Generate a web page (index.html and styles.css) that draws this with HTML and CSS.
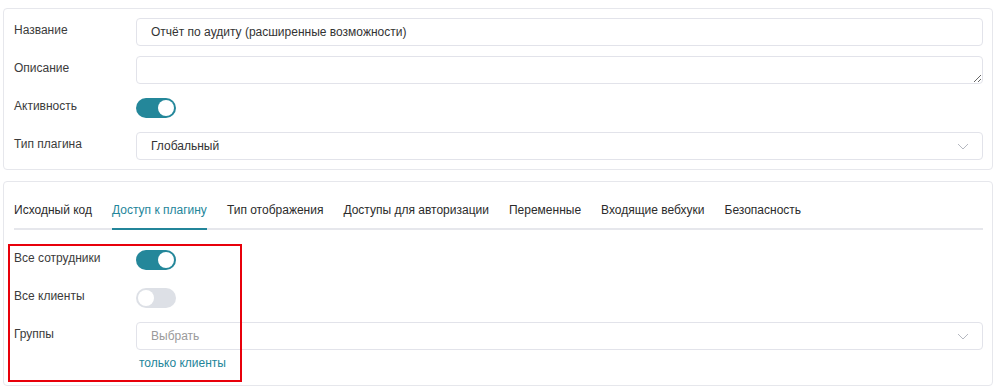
FILE: index.html
```html
<!DOCTYPE html>
<html lang="ru">

<head>
    <meta charset="UTF-8">
    <meta name="viewport" content="width=device-width, initial-scale=1.0">
    <title>Плагин</title>
    <link rel="stylesheet" href="styles.css">
</head>

<body>
    <div class="card card-main">
        <div class="form-row">
            <label class="label">Название</label>
            <div class="field">
                <input class="input" type="text" value="Отчёт по аудиту (расширенные возможности)">
            </div>
        </div>
        <div class="form-row">
            <label class="label">Описание</label>
            <div class="field">
                <textarea class="input textarea"></textarea>
            </div>
        </div>
        <div class="form-row">
            <label class="label">Активность</label>
            <div class="field field-toggle">
                <span class="toggle on"><span class="knob"></span></span>
            </div>
        </div>
        <div class="form-row">
            <label class="label">Тип плагина</label>
            <div class="field">
                <div class="select">
                    <span>Глобальный</span>
                    <svg class="chevron" width="12" height="7" viewBox="0 0 12 7"><path d="M1 1l5 5 5-5" fill="none" stroke="#b5b8c0" stroke-width="1"/></svg>
                </div>
            </div>
        </div>
    </div>

    <div class="card card-tabs">
        <div class="tabs">
            <a class="tab">Исходный код</a>
            <a class="tab active">Доступ к плагину</a>
            <a class="tab">Тип отображения</a>
            <a class="tab">Доступы для авторизации</a>
            <a class="tab">Переменные</a>
            <a class="tab">Входящие вебхуки</a>
            <a class="tab">Безопасность</a>
        </div>
        <div class="tab-body">
            <div class="form-row">
                <label class="label">Все сотрудники</label>
                <div class="field field-toggle">
                    <span class="toggle on"><span class="knob"></span></span>
                </div>
            </div>
            <div class="form-row">
                <label class="label">Все клиенты</label>
                <div class="field field-toggle">
                    <span class="toggle"><span class="knob"></span></span>
                </div>
            </div>
            <div class="form-row">
                <label class="label">Группы</label>
                <div class="field">
                    <div class="select">
                        <span class="placeholder">Выбрать</span>
                        <svg class="chevron" width="12" height="7" viewBox="0 0 12 7"><path d="M1 1l5 5 5-5" fill="none" stroke="#b5b8c0" stroke-width="1"/></svg>
                    </div>
                    <a class="hint">только клиенты</a>
                </div>
            </div>
            <div class="highlight"></div>
        </div>
    </div>
</body>

</html>
```

FILE: styles.css
```css
* {
    margin: 0;
    padding: 0;
    box-sizing: border-box;
}

body {
    font-family: "Liberation Sans", Arial, sans-serif;
    font-size: 12px;
    color: #333;
    background: #fff;
    width: 100%;
    height: 100vh;
}

.card {
    border: 1px solid #e6e7ec;
    border-radius: 4px;
    margin-left: 3px;
    width: 990px;
}

.card-main {
    margin-top: 8px;
    padding: 9px 9px 9px 10px;
    display: flex;
    flex-direction: column;
    gap: 10px;
}

.card-tabs {
    margin-top: 11px;
    padding: 10px 9px 14px 10px;
    position: relative;
}

.form-row {
    display: flex;
    align-items: flex-start;
}

.label {
    width: 122px;
    flex-shrink: 0;
    padding-top: 5px;
    line-height: 15px;
    color: #3b3b3b;
}

.field {
    flex: 1;
    display: flex;
    flex-direction: column;
}

.field-toggle {
    height: 28px;
    justify-content: center;
}

.input {
    height: 28px;
    border: 1px solid #e2e3ea;
    border-radius: 4px;
    padding: 0 14px;
    font-family: inherit;
    font-size: 12px;
    color: #333;
    outline: none;
}

.textarea {
    padding: 5px 14px;
    resize: vertical;
    display: block;
}

.toggle {
    display: block;
    width: 40px;
    height: 20px;
    border-radius: 10px;
    background: #dde0e6;
    position: relative;
}

.toggle.on {
    background: #24879a;
}

.toggle .knob {
    position: absolute;
    top: 2px;
    left: 2px;
    width: 16px;
    height: 16px;
    border-radius: 50%;
    background: #fff;
}

.toggle.on .knob {
    left: 22px;
}

.select {
    height: 28px;
    border: 1px solid #e2e3ea;
    border-radius: 4px;
    padding: 0 13px 0 14px;
    display: flex;
    align-items: center;
    justify-content: space-between;
    color: #333;
}

.placeholder {
    color: #9a9a9a;
}

.hint {
    color: #23859a;
    margin-top: 6px;
    padding-left: 3px;
    line-height: 15px;
}

.tabs {
    display: flex;
    gap: 20px;
    border-bottom: 2px solid #e6e7ec;
}

.tab {
    padding: 10px 0;
    line-height: 16px;
    color: #2b2b2b;
    border-bottom: 2px solid transparent;
    margin-bottom: -2px;
}

.tab.active {
    color: #23859a;
    border-bottom-color: #23859a;
}

.tab-body {
    padding-top: 16px;
    display: flex;
    flex-direction: column;
    gap: 10px;
}

/* red frame on top of the access fields */
.highlight {
    position: absolute;
    left: 4px;
    top: 62px;
    width: 234px;
    height: 138px;
    border: 2px solid #e8000b;
    pointer-events: none;
}
```
